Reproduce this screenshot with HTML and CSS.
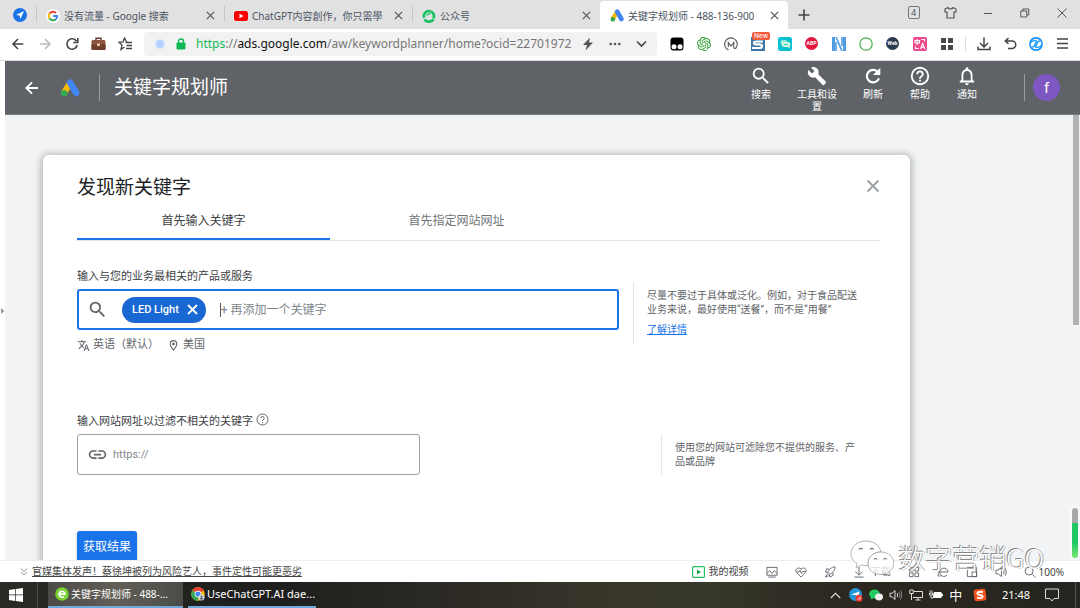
FILE: index.html
```html
<!DOCTYPE html>
<html lang="zh-CN">
<head>
<meta charset="utf-8">
<title>关键字规划师</title>
<link rel="stylesheet" href="styles.css">
</head>
<body>
<svg class="defs" aria-hidden="true">
  <symbol id="i-x" viewBox="0 0 12 12"><path d="M2 2l8 8M10 2l-8 8" fill="none" stroke="currentColor" stroke-width="1.3"/></symbol>
  <symbol id="i-ads" viewBox="0 0 24 22"><path d="M4.500 17L12.500 4.500" stroke="#fbbc04" stroke-width="7.500" fill="none"/><path d="M12.300 4.500L19.500 17" stroke="#4285f4" stroke-width="8" stroke-linecap="round"/><circle cx="4.800" cy="17.300" r="3.900" fill="#34a853"/></symbol>
  <symbol id="i-search" viewBox="0 0 24 24"><path fill="currentColor" d="M15.500 14h-.79l-.28-.27A6.470 6.470 0 0 0 16 9.500 6.500 6.500 0 1 0 9.500 16c1.610 0 3.090-.59 4.230-1.570l.27.28v.79l5 4.990L20.490 19l-4.990-5zm-6 0C7.010 14 5 11.990 5 9.500S7.010 5 9.500 5 14 7.010 14 9.500 11.990 14 9.500 14z"/></symbol>
  <symbol id="i-back" viewBox="0 0 16 16"><path d="M14 8H2.500M8 2.300L2.300 8 8 13.700" fill="none" stroke="currentColor" stroke-width="1.800"/></symbol>
</svg>

<header class="tabstrip">
  <button class="pinned" aria-label="主页"><svg width="14" height="14" viewBox="0 0 14 14"><circle cx="7" cy="7" r="7" fill="#1a73e8"/><path d="M3 7l8-4-3.500 8-1-3.400z" fill="#fff"/></svg></button>
  <div class="btab">
    <svg width="14" height="14" viewBox="0 0 14 14"><circle cx="7" cy="7" r="7" fill="#fff"/><g fill="none" stroke-width="2"><path d="M3.500 4.600A4.200 4.200 0 0 1 10 4" stroke="#ea4335"/><path d="M3.500 4.600a4.200 4.200 0 0 0 0 4.800" stroke="#fbbc05"/><path d="M3.500 9.400a4.200 4.200 0 0 0 6.300.8" stroke="#34a853"/><path d="M9.800 10.200A4.200 4.200 0 0 0 11.200 7H7.200" stroke="#4285f4"/></g></svg>
    <span class="btab-title">没有流量 - Google 搜索</span><button class="close" aria-label="关闭标签"><svg width="11" height="11"><use href="#i-x"/></svg></button>
  </div>
  <div class="btab">
    <svg width="14" height="14" viewBox="0 0 14 14"><rect y="2" width="14" height="10" rx="2.500" fill="#f00"/><path d="M5.500 4.700v4.600L9.500 7z" fill="#fff"/></svg>
    <span class="btab-title">ChatGPT内容創作，你只需學</span><button class="close" aria-label="关闭标签"><svg width="11" height="11"><use href="#i-x"/></svg></button>
  </div>
  <div class="btab">
    <svg width="14" height="14" viewBox="0 0 14 14" fill="none" stroke="#12c160" stroke-width="2.600"><path d="M2.200 8.800A5 5 0 0 1 8.500 2.300M8.800 2.400a5 5 0 0 1 2.600 7M11.500 10.300a5.500 5.500 0 0 1-9 .2"/><path d="M4.800 6.500A3 3 0 0 1 9 5" stroke-width="1.200"/></svg>
    <span class="btab-title">公众号</span><button class="close" aria-label="关闭标签"><svg width="11" height="11"><use href="#i-x"/></svg></button>
  </div>
  <div class="btab active">
    <svg width="14" height="13"><use href="#i-ads"/></svg>
    <span class="btab-title">关键字规划师 - 488-136-900</span><button class="close" aria-label="关闭标签"><svg width="11" height="11"><use href="#i-x"/></svg></button>
  </div>
  <button class="newtab" aria-label="新建标签"><svg width="12" height="12" viewBox="0 0 12 12"><path d="M6 .5v11M.5 6h11" stroke="#444" stroke-width="1.600"/></svg></button>
  <div class="winbtns">
    <button class="count">4</button>
    <button aria-label="皮肤"><svg width="13" height="13" viewBox="0 0 13 13" fill="none" stroke="#555" stroke-width="1.200"><path d="M4 1.500L1 3v3h2v6h7V6h2V3L9 1.500C8.500 3.500 4.500 3.500 4 1.500z"/></svg></button>
    <button aria-label="最小化"><svg width="10" height="10" viewBox="0 0 10 10"><path d="M1 5.500h8" stroke="#555"/></svg></button>
    <button aria-label="还原"><svg width="10" height="10" viewBox="0 0 10 10" fill="none" stroke="#555"><path d="M.8 3h6v6h-6zM2.800 3V1h6v6h-2"/></svg></button>
    <button aria-label="关闭"><svg width="12" height="12" viewBox="0 0 12 12"><path d="M1.500 1.500l9 9M10.500 1.500l-9 9" stroke="#555"/></svg></button>
  </div>
</header>

<div class="toolbar">
  <div class="cells">
    <button aria-label="后退"><svg class="ink" width="14" height="14"><use href="#i-back"/></svg></button>
    <button aria-label="前进"><svg width="14" height="14" viewBox="0 0 16 16"><path d="M2 8h11.500M8 2.300L13.700 8 8 13.700" fill="none" stroke="#bbb" stroke-width="1.800"/></svg></button>
    <button aria-label="刷新"><svg width="14" height="14" viewBox="0 0 14 14"><path d="M11.500 4.200A5.200 5.200 0 1 0 12.200 8" fill="none" stroke="#444" stroke-width="1.600"/><path d="M12.800 1v4.500H8.300" fill="none" stroke="#444" stroke-width="1.600"/></svg></button>
    <button aria-label="工具箱"><svg width="15" height="14" viewBox="0 0 15 14"><path d="M5 3V1.200h5V3" fill="none" stroke="#6b3a2a" stroke-width="1.400"/><rect x=".5" y="3" width="14" height="10" rx="1.500" fill="#8d5440"/><path d="M.5 7.500h14V12a1 1 0 0 1-1 1h-12a1 1 0 0 1-1-1z" fill="#6f3d2c"/><rect x="6" y="6.500" width="3" height="2.500" fill="#e8c9a0"/></svg></button>
    <button aria-label="收藏"><svg width="15" height="14" viewBox="0 0 15 14" fill="none" stroke="#444" stroke-width="1.300"><path d="M8.500 5L6.500 1 5 5 1 5.400l3 2.700L3 12.400 6.500 10M7.500 5.500H14M8.500 8.500H14M8 11.500h6"/></svg></button>
  </div>
  <div class="address">
    <svg width="12" height="12" viewBox="0 0 12 12"><circle cx="6" cy="6" r="5.500" fill="#dce9ff"/><circle cx="6" cy="6" r="4" fill="#b5d1ff"/></svg>
    <svg width="10" height="12" viewBox="0 0 10 12"><path d="M2.500 5V3.500a2.500 2.500 0 0 1 5 0V5" fill="none" stroke="#0fb955" stroke-width="1.400"/><rect x=".5" y="4.500" width="9" height="7" rx="1" fill="#0fb955"/></svg>
    <div class="url" role="textbox" aria-label="地址" contenteditable="true" spellcheck="false"><span class="scheme">https</span>://<span class="host">ads.google.com</span>/aw/keywordplanner/home?ocid=22701972</div>
    <div class="cells">
      <button aria-label="极速"><svg width="12" height="14" viewBox="0 0 12 14"><path d="M8 .5L1 8h4l-1.500 5.500L11 5.500H7z" fill="#555"/></svg></button>
      <button aria-label="更多"><svg width="12" height="4" viewBox="0 0 12 4" fill="#555"><circle cx="1.700" cy="2" r="1.300"/><circle cx="6" cy="2" r="1.300"/><circle cx="10.300" cy="2" r="1.300"/></svg></button>
      <button aria-label="展开"><svg width="11" height="8" viewBox="0 0 11 8"><path d="M1 1.500l4.500 4.500L10 1.500" fill="none" stroke="#444" stroke-width="1.600"/></svg></button>
    </div>
  </div>
  <div class="cells ext">
    <button aria-label="扩展"><svg width="14" height="14" viewBox="0 0 14 14"><rect x=".5" y=".5" width="13" height="13" rx="3" fill="#000"/><circle cx="4" cy="9.700" r="2.500" fill="#fff"/><circle cx="10" cy="9.700" r="2.500" fill="#fff"/></svg></button>
    <button aria-label="ChatGPT"><svg width="14" height="14" viewBox="0 0 24 24"><path fill="#2a9d2f" d="M22.280 9.820a5.980 5.980 0 0 0-.52-4.910 6.050 6.050 0 0 0-6.510-2.900A6.070 6.070 0 0 0 4.980 4.180a5.980 5.980 0 0 0-4 2.900 6.050 6.050 0 0 0 .74 7.100 5.980 5.980 0 0 0 .51 4.910 6.050 6.050 0 0 0 6.520 2.900A5.980 5.980 0 0 0 13.260 24a6.060 6.060 0 0 0 5.770-4.210 5.990 5.990 0 0 0 4-2.900 6.060 6.060 0 0 0-.75-7.070zm-9.020 12.610a4.480 4.480 0 0 1-2.880-1.040l.14-.08 4.780-2.760a.79.79 0 0 0 .39-.68v-6.740l2.020 1.170v5.620a4.500 4.500 0 0 1-4.450 4.510zM3.600 18.300a4.470 4.470 0 0 1-.54-3.010l.14.09 4.790 2.760a.77.77 0 0 0 .78 0l5.840-3.370v2.330L9.740 19.950A4.500 4.500 0 0 1 3.600 18.300zM2.340 7.900a4.490 4.490 0 0 1 2.370-1.970v5.670a.77.77 0 0 0 .39.680l5.810 3.350-2.020 1.170-4.830-2.790A4.500 4.500 0 0 1 2.340 7.900zm16.600 3.860L13.100 8.360l2.020-1.160 4.830 2.790a4.490 4.490 0 0 1-.68 8.100v-5.680a.79.79 0 0 0-.33-.65zm2.010-3.030l-.14-.09-4.780-2.780a.78.78 0 0 0-.78 0L9.410 9.230V6.900l4.860-2.840a4.500 4.500 0 0 1 6.680 4.670zM8.310 12.860L6.290 11.700V6.080a4.500 4.500 0 0 1 7.370-3.460l-.14.080-4.780 2.760a.79.79 0 0 0-.39.680zm1.090-2.360L12 9l2.610 1.500v3L12 15l-2.600-1.500z"/></svg></button>
    <button aria-label="Merlin"><svg width="14" height="14" viewBox="0 0 14 14" fill="none" stroke="#555" stroke-width="1.100"><path d="M4.500 13A6.300 6.300 0 1 1 12 11c-1 1-2.200.5-2.200-1V5.500L7 9 4.300 5.500V10"/></svg></button>
    <button class="has-new" aria-label="S"><svg width="14" height="14" viewBox="0 0 14 14"><rect width="14" height="14" fill="#3f77a8"/><path d="M12 4.500H5.500C2 4.500 2.500 7.300 5 7.300h3.500c3.500 0 3 3.700 0 3.700H1" fill="none" stroke="#fff" stroke-width="2.200"/></svg><span class="new">New</span></button>
    <button aria-label="聊天"><svg width="14" height="14" viewBox="0 0 14 14"><rect width="14" height="14" rx="2.500" fill="#06c1cf"/><rect x="2.500" y="3" width="7" height="5" rx="2" fill="#8fe6d8"/><path d="M6 5h4a2.500 2.500 0 0 1 1.500 4.500L12 11.500 9.500 10H6.500a2.500 2.500 0 0 1-.5-5z" fill="#d4f7df"/><path d="M6 7.500h4" stroke="#06c1cf" stroke-width=".8"/></svg></button>
    <button class="abp">ABP</button>
    <button aria-label="N"><svg width="14" height="14" viewBox="0 0 14 14"><path d="M0 0h3v14H0zM11 0h3v14h-3z" fill="#4e9be0"/><path d="M4 0l6 14M4 5v9M10 0v9" stroke="#4e9be0" stroke-width="1.600"/></svg></button>
    <button aria-label="圆环"><svg width="14" height="14" viewBox="0 0 14 14"><circle cx="7" cy="7" r="6.200" fill="none" stroke="#4caf50" stroke-width="1.200"/></svg></button>
    <button class="web">Web</button>
    <button class="trans" aria-label="翻译"><svg width="14" height="14" viewBox="0 0 14 14"><rect width="14" height="14" rx="2" fill="#ec4a8b"/><g fill="none" stroke="#fff" stroke-width="1.100"><path d="M2 3.500h4.500V6H2zM4.200 2v6M7.500 12L9.700 6.500 12 12M8.300 10.300h2.800M8.500 2.500h3v2M2.500 9.500v2h3"/></g></svg></button>
    <button aria-label="应用"><svg width="12" height="12" viewBox="0 0 12 12" fill="#484848"><path d="M0 0h5v5H0zM7 0h5v5H7zM0 7h5v5H0zM7 7h5v5H7z"/></svg></button>
  </div>
  <div class="cells tools">
    <button aria-label="下载"><svg width="14" height="14" viewBox="0 0 14 14" fill="none" stroke="#444" stroke-width="1.500"><path d="M7 .5v9M3 6l4 4 4-4M1 9.500v3h12v-3"/></svg></button>
    <button aria-label="恢复"><svg width="13" height="13" viewBox="0 0 13 13" fill="none" stroke="#444" stroke-width="1.500"><path d="M4.500 1L1.300 4l3.200 3M1.500 4H8a3.700 3.700 0 0 1 0 7.500H4"/></svg></button>
    <button aria-label="助手"><svg width="14" height="14" viewBox="0 0 14 14" fill="none"><circle cx="7" cy="7" r="6.100" stroke="#1b8df2" stroke-width="1.600"/><path d="M1 6.500c2-3 4-3.500 6.500-2.500L6 7.500M13 7.500c-2 3-4 3.500-6.500 2.500L8 6.500M3 10c2 .5 2.500-1.500 3-3M11 4c-2-.5-2.500 1.500-3 3" stroke="#2aa5f8" stroke-width="1.500"/></svg></button>
    <button aria-label="菜单"><svg width="11" height="11" viewBox="0 0 11 11"><path d="M0 1h11M0 5.500h11M0 10h11" stroke="#444" stroke-width="1.500"/></svg></button>
  </div>
</div>

<div class="viewport">
  <button class="gutter" aria-label="展开侧栏"><svg width="4" height="6" viewBox="0 0 4 6"><path d="M0 0l3.500 3L0 6z" fill="#999"/></svg></button>
  <div class="app">
    <div class="appbar">
      <button class="app-back" aria-label="返回"><svg width="16" height="16"><use href="#i-back"/></svg></button>
      <svg width="20" height="18"><use href="#i-ads"/></svg>
      <h1>关键字规划师</h1>
      <nav>
        <button><svg width="22" height="22"><use href="#i-search"/></svg>搜索</button>
        <button><svg width="20" height="22" viewBox="0 0 24 24"><path fill="currentColor" d="M22.700 19l-9.100-9.100c.9-2.300.4-5-1.500-6.900-2-2-5-2.400-7.400-1.300L9 6 6 9 1.600 4.700C.4 7.100.9 10.100 2.900 12.100c1.900 1.900 4.600 2.400 6.900 1.500l9.100 9.100c.4.4 1 .4 1.400 0l2.300-2.300c.5-.4.5-1.100.1-1.400z"/></svg>工具和设置</button>
        <button><svg width="22" height="22" viewBox="0 0 24 24"><path fill="none" stroke="currentColor" stroke-width="2.400" d="M17.500 8A6.800 6.800 0 1 0 18.500 14.500"/><path fill="currentColor" d="M20 3v8h-8z"/></svg>刷新</button>
        <button><svg width="22" height="22" viewBox="0 0 24 24"><path fill="currentColor" d="M11 18h2v-2h-2v2zm1-16a10 10 0 1 0 0 20 10 10 0 0 0 0-20zm0 18a8 8 0 1 1 0-16 8 8 0 0 1 0 16zm0-14a4 4 0 0 0-4 4h2a2 2 0 1 1 4 0c0 2-3 1.750-3 5h2c0-2.250 3-2.500 3-5a4 4 0 0 0-4-4z"/></svg>帮助</button>
        <button><svg width="22" height="22" viewBox="0 0 24 24"><path fill="currentColor" d="M12 22a2 2 0 0 0 2-2h-4c0 1.100.9 2 2 2zm6-6v-5c0-3.070-1.630-5.640-4.500-6.320V4a1.500 1.500 0 0 0-3 0v.68C7.640 5.360 6 7.920 6 11v5l-2 2v1h16v-1l-2-2zm-2 1H8v-6c0-2.480 1.510-4.500 4-4.500s4 2.020 4 4.500v6z"/></svg>通知</button>
      </nav>
      <div class="account"><button class="avatar">f</button></div>
    </div>
    <main>
      <section class="card">
        <button class="card-close" aria-label="关闭"><svg width="18" height="18" viewBox="0 0 18 18"><path d="M3.500 3.500l11 11M14.500 3.500l-11 11" stroke="currentColor" stroke-width="1.800"/></svg></button>
        <h2>发现新关键字</h2>
        <div class="tabs" role="tablist">
          <button role="tab" aria-selected="true">首先输入关键字</button>
          <button role="tab" aria-selected="false">首先指定网站网址</button>
        </div>
        <div class="row">
          <div class="field-col wide">
            <label for="kw">输入与您的业务最相关的产品或服务</label>
            <div class="field focus">
              <svg class="grey" width="21" height="21"><use href="#i-search"/></svg>
              <span class="chip">LED Light<button aria-label="移除"><svg width="11" height="11" viewBox="0 0 11 11"><path d="M1 1l9 9M10 1l-9 9" stroke="#fff" stroke-width="1.800"/></svg></button></span>
              <span class="caret"></span><input id="kw" type="text" placeholder="+ 再添加一个关键字">
            </div>
            <div class="locale">
              <button><svg width="13" height="13" viewBox="0 0 24 24"><path fill="currentColor" d="M12.870 15.070l-2.540-2.510.03-.03A17.520 17.520 0 0 0 14.070 6H17V4h-7V2H8v2H1v2h11.170C11.500 7.920 10.440 9.750 9 11.350 8.070 10.320 7.300 9.190 6.690 8h-2c.73 1.630 1.730 3.170 2.980 4.560l-5.090 5.020L4 19l5-5 3.110 3.110.76-2.040zM18.500 10h-2L12 22h2l1.120-3h4.750L21 22h2l-4.500-12zm-2.620 7l1.620-4.330L19.120 17h-3.240z"/></svg>英语（默认）</button>
              <button><svg width="13" height="13" viewBox="0 0 24 24"><path fill="currentColor" d="M12 2a7 7 0 0 0-7 7c0 5.250 7 13 7 13s7-7.750 7-13a7 7 0 0 0-7-7zM7 9a5 5 0 0 1 10 0c0 2.880-2.880 7.190-5 9.880C9.920 16.210 7 11.850 7 9z"/><circle cx="12" cy="9" r="2.500" fill="currentColor"/></svg>美国</button>
            </div>
          </div>
          <aside class="hint grow">
            <p>尽量不要过于具体或泛化。例如，对于食品配送<br>业务来说，最好使用“送餐”，而不是“用餐”</p>
            <a href="#">了解详情</a>
          </aside>
        </div>
        <div class="row second">
          <div class="field-col">
            <div class="label-line"><label for="site">输入网站网址以过滤不相关的关键字</label><button class="help" aria-label="帮助"><svg width="13" height="13" viewBox="0 0 13 13"><circle cx="6.500" cy="6.500" r="5.500" fill="none" stroke="currentColor"/><path d="M4.800 5.200a1.700 1.700 0 1 1 2.600 1.500c-.7.400-.9.700-.9 1.300M6.500 9v1.100" fill="none" stroke="currentColor"/></svg></button></div>
            <div class="field">
              <svg class="grey" width="21" height="21" viewBox="0 0 24 24"><path fill="currentColor" d="M3.900 12c0-1.710 1.390-3.100 3.100-3.100h4V7H7a5 5 0 0 0 0 10h4v-1.900H7A3.100 3.100 0 0 1 3.900 12zM8 13h8v-2H8v2zm9-6h-4v1.900h4a3.100 3.100 0 0 1 0 6.200h-4V17h4a5 5 0 0 0 0-10z"/></svg>
              <input id="site" class="site" type="text" placeholder="https://">
            </div>
          </div>
          <aside class="hint end">
            <p>使用您的网站可滤除您不提供的服务、产<br>品或品牌</p>
          </aside>
        </div>
        <button class="submit">获取结果</button>
      </section>
    </main>
    <div class="scroll-thumb"></div>
    <div class="meter"></div>
  </div>
</div>

<div class="status">
  <svg width="8" height="8" viewBox="0 0 8 8" fill="none" stroke="#999"><path d="M1 .5l3 3 3-3M1 4l3 3 3-3"/></svg>
  <a class="news" href="#">官媒集体发声！蔡徐坤被列为风险艺人，事件定性可能更恶劣</a>
  <button class="video"><svg width="13" height="12" viewBox="0 0 13 12"><rect x=".6" y=".6" width="11.800" height="10.800" rx="1" fill="none" stroke="#25c063" stroke-width="1.200"/><path d="M5 3.500v5L9 6z" fill="#18a84e"/></svg>我的视频</button>
  <div class="status-icons">
    <button aria-label="图片"><svg viewBox="0 0 13 13"><path d="M1 1.500h11v8.500H1zM1 8l3-3 2.500 3L9 5l3 3M2.500 12h8"/></svg></button>
    <button aria-label="健康"><svg viewBox="0 0 13 13"><path d="M6.500 12L1.500 7C-.5 4 2.500.5 6.500 3.200 10.500.5 13.500 4 11.500 7zM1.500 6.500h2.500l1.500-2 1.500 3.500 1.500-2h3"/></svg></button>
    <button aria-label="加速"><svg viewBox="0 0 13 13"><path d="M12 1C8 1 5 4 4 7.500L5.500 9C9 8 12 5 12 1zM6 3.500L3 3 1.500 6.500l2.500.5M9.500 7l.5 3-3.500 2L5.500 9M3.500 8.500L1.500 12l3.500-1.500"/></svg></button>
    <button class="dl"><svg viewBox="0 0 13 13"><path d="M6.500 1v8.500M2.500 6l4 4 4-4M1.500 12h10"/></svg>下载</button>
    <button aria-label="应用"><svg viewBox="0 0 13 13"><path d="M1.500 1.500h4v4h-4zM7.500 1.500h4v4h-4zM1.500 7.500h4v4h-4zM7.500 7.500h4v4h-4z"/></svg></button>
    <button aria-label="浏览"><svg viewBox="0 0 13 13"><path d="M3.500 6.500H12a4.500 4.500 0 1 0-1.300 3.500M3.500 4.500c-3 4-3.500 8 .5 6"/></svg></button>
    <button aria-label="窗口"><svg viewBox="0 0 13 13"><path d="M1.500 1.500h10v10h-10zM6.500 6.500h5v5h-5z"/></svg></button>
    <button aria-label="声音"><svg viewBox="0 0 13 13"><path d="M1 4.500h2.500L7 1.500v10l-3.500-3H1zM9 4c1 1.500 1 3.500 0 5M11 2.500c1.500 2.500 1.500 5.500 0 8"/></svg></button>
  </div>
  <button class="zoom"><svg viewBox="0 0 13 13"><circle cx="5.500" cy="5.500" r="4.300"/><path d="M9 9l3.500 3.500"/></svg>100%</button>
</div>

<footer class="taskbar">
  <button class="start" aria-label="开始"><svg width="14" height="14" viewBox="0 0 14 14" fill="#fff"><path d="M0 2l6-.9v5.500H0zM6.700 1L14 0v6.600H6.700zM0 7.300h6v5.600L0 12zM6.700 7.300H14V14l-7.300-1z"/></svg></button>
  <button class="task current"><svg width="14" height="14" viewBox="0 0 14 14"><circle cx="7" cy="7" r="6.800" fill="#77cf32"/><path d="M4 7.200h6a3 3 0 1 0-1 2.300" fill="none" stroke="#fff" stroke-width="1.700"/></svg>关键字规划师 - 488-...</button>
  <button class="task"><svg width="14" height="14" viewBox="0 0 14 14"><circle cx="7" cy="7" r="6.800" fill="#fbbc04"/><path d="M7 7L1.100 3.600a6.800 6.800 0 0 1 11.800 0z" fill="#ea4335"/><path d="M7 7L1.100 3.600A6.800 6.800 0 0 0 7 13.800z" fill="#34a853"/><circle cx="7" cy="7" r="3.300" fill="#fff"/><circle cx="7" cy="7" r="2.600" fill="#4285f4"/><circle cx="10.500" cy="10.500" r="3" fill="#cfd8e6"/><path d="M8.800 12.500a1.700 1.700 0 0 1 3.400 0" fill="#556"/><circle cx="10.500" cy="9.700" r="1" fill="#556"/></svg>UseChatGPT.AI dae...</button>
  <div class="tray">
    <button aria-label="隐藏的图标"><svg width="11" height="7" viewBox="0 0 11 7" fill="none" stroke="#ddd" stroke-width="1.200"><path d="M.8 6l4.700-4.700L10.200 6"/></svg></button>
    <button aria-label="浏览器"><svg width="14" height="14" viewBox="0 0 14 14"><circle cx="6.500" cy="6.500" r="6.500" fill="#2196d8"/><path d="M2 6.500l8.500-3-1.500 5-2.500-1.500z" fill="#fff"/><circle cx="10" cy="10.300" r="3.500" fill="#e53935"/><path d="M8.500 11.500h.8M10 11.500V9.500M11.200 11.500V8.500" stroke="#fff" stroke-width=".7"/></svg></button>
    <button aria-label="微信"><svg width="14" height="12" viewBox="0 0 14 12"><ellipse cx="5.500" cy="5" rx="5.300" ry="4.500" fill="#20cf5d"/><path d="M2 8l-.5 2.500L5 9z" fill="#20cf5d"/><ellipse cx="10" cy="8" rx="4" ry="3.400" fill="#eee"/><g fill="#286"><circle cx="3.800" cy="3.700" r=".6"/><circle cx="7.300" cy="3.700" r=".6"/></g></svg></button>
    <button aria-label="音量"><svg width="13" height="12" viewBox="0 0 13 12" fill="none" stroke="#ddd"><path d="M1 4.300h2L6 1.500v9L3 7.700H1zM8 4c.8 1.200.8 2.800 0 4"/><path d="M9.800 2.800c1.400 2 1.400 4.400 0 6.400M11.500 1.500c1.600 2.800 1.600 6.200 0 9" stroke="#888"/></svg></button>
    <button aria-label="网络"><svg width="14" height="12" viewBox="0 0 14 12" fill="none" stroke="#ddd"><path d="M5 2.500h8.500v6H4M9 8.500v2.500M6.500 11h5M.8 1h3.500v3.500H.8zM2.500 4.500V11"/></svg></button>
    <button aria-label="电池"><svg width="14" height="12" viewBox="0 0 14 12"><path d="M5 3h7.500v1.700H14v2.600h-1.500V9H4V6z" fill="#fff"/><path d="M1 1.500v2M3 1.500v2M.5 4h3v2h-3zM2 6v3h2" fill="none" stroke="#ddd"/></svg></button>
    <button class="ime">中</button>
    <button class="sogou" aria-label="搜狗输入法"><svg width="14" height="14" viewBox="0 0 14 14"><rect x="1" y="1" width="12" height="12" rx="2.500" fill="#f0541e" transform="rotate(-6 7 7)"/><path d="M10 4C5 3 3.500 5 5 6.200c1.500 1 4 .6 4.500 2C10 10 7 10.500 4 9.700" fill="none" stroke="#fff" stroke-width="1.900"/></svg></button>
    <time>21:48</time>
    <button aria-label="通知"><svg width="14" height="14" viewBox="0 0 14 14" fill="none" stroke="#ddd"><path d="M.5 1h13v9.500H9L7 13l-2-2.500H.5z"/></svg></button>
  </div>
</footer>

<div class="watermark">
  <svg width="44" height="36" viewBox="0 0 44 36"><g fill="#fff" fill-opacity=".8" stroke="#a0a0a0" stroke-width=".8"><path d="M16 1C7.500 1 1 6.500 1 13.500c0 4.500 2.200 7.800 6 10L6 28l5.500-3c2 .5 4.500.8 7 .5-2-7 4-13.500 12.300-13.500C30 5.500 24 1 16 1z"/><path d="M31 12c-7.500 0-13 5-13 11.500S23.500 34.500 31 34.500c1.500 0 3-.2 4.500-.7L40 35.500l-1.200-3.600c3-2.200 5-5 5-8.600C43.800 17 38.500 12 31 12z"/></g><g fill="none" stroke="#777" stroke-width="1.100"><path d="M9 9.500a2 2 0 0 1 3.600 0M20 9.500a2 2 0 0 1 3.600 0M24 19.500a1.800 1.800 0 0 1 3.200 0M33.500 19.500a1.800 1.800 0 0 1 3.200 0"/></g></svg>
  <span>数字营销GO</span>
</div>
</body>
</html>
```
FILE: styles.css
```css
* { box-sizing: border-box; }
html, body { height: 100%; }
body {
  margin: 0;
  position: relative;
  display: flex;
  flex-direction: column;
  overflow: hidden;
  background: #fff;
  color: #3c4043;
  font: 11px/14px Roboto, "Noto Sans CJK SC", sans-serif;
}
button {
  margin: 0; padding: 0; border: 0; background: none;
  color: inherit; font: inherit; cursor: pointer;
  display: flex; align-items: center; justify-content: center;
}
input { border: 0; outline: 0; background: none; padding: 0; font: inherit; min-width: 0; }
h1, h2, p { margin: 0; font-weight: 400; }
svg { flex: none; display: block; }
.defs { position: absolute; width: 0; height: 0; }
.ink { color: #444; }
.grey { color: #5f6368; }

/* Browser tabs */
.tabstrip {
  display: flex; flex: none; height: 29px;
  background: #e1e1e1; color: #4b5563;
  font-family: "Noto Sans", "Noto Sans CJK SC", sans-serif; font-size: 10px;
}
.pinned { width: 36px; padding-left: 4px; flex: none; }
.btab {
  display: flex; align-items: center; gap: 4px;
  flex: 0 1 188px; min-width: 0; padding: 2px 8px 0 10px;
  background: linear-gradient(#c6c6c6, #c6c6c6) 0 6px / 1px 16px no-repeat;
}
.btab-title { flex: 1; min-width: 0; overflow: hidden; white-space: nowrap; }
.btab.active { background: #fff; border-radius: 4px 4px 0 0; margin-top: 1px; padding-top: 1px; }
.close { width: 12px; height: 12px; color: #555; }
.newtab { width: 32px; flex: none; }
.winbtns { display: grid; grid-template-columns: repeat(5, 37px); margin-left: auto; height: 25px; align-items: center; }
.winbtns .count { justify-self: center; width: 12px; height: 13px; border: 1px solid #777; border-radius: 2px; font-size: 9px; line-height: 11px; }

/* Address bar */
.toolbar { display: flex; align-items: center; flex: none; height: 32px; padding: 0 5px 2px 4px; border-bottom: 1px solid #ddd; }
.cells { display: grid; grid-auto-flow: column; grid-auto-columns: 27px; align-items: center; }
.address { display: flex; align-items: center; gap: 10px; flex: 1; min-width: 0; height: 24px; margin: 0 6px 0 5px; padding-left: 10px; background: #f2f2f2; border-radius: 4px; }
.url { flex: 1; min-width: 0; overflow: hidden; white-space: nowrap; outline: 0; color: #777; font: 12px/18px "Noto Sans", sans-serif; }
.url + .cells { margin-left: -10px; padding-right: 2px; }
.scheme { color: #12b955; }
.host { color: #111; }
.tools { grid-auto-columns: 26px; margin-left: 5px; padding-left: 5px; border-left: 1px solid #ddd; }
.has-new { position: relative; }
.new { position: absolute; top: -5px; right: 1px; padding: 0 2px; border-radius: 2px; background: #f25a3c; color: #fff; font-size: 7px; line-height: 8px; }
.abp, .web { justify-self: center; width: 13px; height: 13px; border-radius: 50%; background: #e3173e; color: #fff; font-size: 5px; font-weight: 700; line-height: 13px; }
.web { background: #2c3a52; }

/* Page area */
.viewport { display: flex; flex: 1; min-height: 0; }
.gutter { width: 5px; flex: none; }
.app { position: relative; flex: 1; min-width: 0; overflow: hidden; background: #f1f3f4; }
.appbar { display: flex; align-items: center; height: 54px; padding: 0 20px 0 19px; background: #5f6368; color: #fff; border-bottom: 1px solid #777b80; }
.app-back { margin-right: 20px; }
.appbar h1 { margin-left: 19px; padding-left: 14px; border-left: 1px solid #9a9da1; font-size: 19px; line-height: 27px; white-space: nowrap; }
.appbar nav { display: flex; align-items: flex-start; gap: 25px; height: 100%; margin-left: auto; padding-top: 4px; }
.appbar nav button { flex-direction: column; max-width: 40px; font-size: 10px; line-height: 12px; gap: 2px; }
.account { margin-left: 46px; padding-left: 8px; border-left: 1px solid #9a9da1; }
.avatar { width: 27px; height: 27px; border-radius: 50%; background: #7e57c2; font-size: 15px; }
main { padding: 40px 38px 0; }
.card { position: relative; max-width: 867px; min-height: 480px; padding: 18px 30px 0 34px; background: #fff; border-radius: 6px; box-shadow: 0 1px 7px 2px rgba(60, 64, 67, .35); }
.card h2 { color: #202124; font-size: 19px; line-height: 30px; }
.card-close { position: absolute; top: 22px; right: 28px; color: #9aa0a6; }
.tabs { display: grid; grid-template-columns: 253px 253px; height: 38px; border-bottom: 1px solid #e4e5e7; }
.tabs button { height: 37px; font-size: 12px; color: #70757a; border-bottom: 2px solid transparent; }
.tabs button[aria-selected="true"] { color: #3c4043; border-color: #1a73e8; }
.row { display: flex; align-items: flex-start; margin-top: 28px; }
.row.second { margin-top: 61px; }
.field-col { display: flex; flex-direction: column; gap: 4px; flex: 0 1 343px; min-width: 0; line-height: 16px; }
.field-col.wide { flex-basis: 542px; }
.field { display: flex; align-items: center; height: 41px; padding: 0 9px; border: 1px solid #9aa0a6; border-radius: 3px; }
.field.focus { border: 2px solid #1a73e8; padding: 0 8px; }
.field input { flex: 1; margin-left: 5px; font-size: 12px; color: #3c4043; }
.field .site { font-size: 11px; }
.field input::placeholder { color: #80868b; opacity: 1; }
.chip { display: flex; align-items: center; gap: 8px; height: 26px; margin: 0 14px; padding: 0 8px 0 10px; border-radius: 13px; background: #1967d2; color: #fff; font-weight: 500; white-space: nowrap; }
.caret { width: 1px; height: 14px; background: #555; }
.field .caret + input { margin-left: 0; }
.locale { display: flex; gap: 8px; padding-top: 3px; color: #5f6368; }
.locale button { gap: 3px; }
.label-line { display: flex; gap: 3px; height: 16px; }
.help { color: #5f6368; height: 13px; margin-top: -1px; }
.hint { min-height: 41px; padding: 7px 0 0 13px; border-left: 1px solid #e4e5e7; color: #5f6368; font-size: 10px; white-space: nowrap; }
.hint.grow { flex: 1; min-height: 62px; margin: 13px 0 0 14px; }
.hint.end { flex: 0 0 219px; margin: 20px 0 0 auto; }
.hint a { display: inline-block; margin-top: 6px; color: #1a73e8; text-decoration: underline; }
.submit { height: 32px; margin-top: 56px; padding: 0 6px; border-radius: 3px; background: #1a73e8; color: #fff; font-size: 12px; box-shadow: 0 1px 2px rgba(0, 0, 0, .3); }
.scroll-thumb { position: absolute; top: 54px; right: 1px; width: 6px; height: 210px; background: #b1b2b4; }
.meter { position: absolute; right: 2px; bottom: 2px; width: 6px; height: 50px; border-radius: 3px; background: linear-gradient(#a8a8a8 0 30%, #1fc864 30% 70%, #7be86f); box-shadow: 0 0 4px 2px rgba(255, 255, 255, .8); }

/* Browser status bar */
.status { display: flex; align-items: center; flex: none; height: 22px; padding: 1px 16px 0 20px; border-top: 1px solid #eee; color: #444; font-size: 10px; }
.news { margin-left: 4px; color: #444; text-decoration: underline; }
.status button { white-space: nowrap; }
.video { gap: 4px; margin-left: auto; }
.status-icons { display: flex; gap: 17px; margin: 0 17px; }
.status-icons svg, .zoom svg { width: 12px; height: 12px; fill: none; stroke: #60646a; stroke-width: 1; }
.dl { gap: 6px; }
.zoom { gap: 3px; font-family: "Noto Sans", sans-serif; }

/* Desktop taskbar */
.taskbar { display: flex; flex: none; height: 26px; padding-right: 4px; background: linear-gradient(90deg, #2a2a25, #1e1e1d 25%, #38342a 55%, #37382b 65%, #2c2820 78%, #25251f); color: #fff; font: 11px/14px "Noto Sans", "Noto Sans CJK SC", sans-serif; }
.start { width: 38px; margin-right: 10px; padding-right: 6px; border-right: 1px solid #4c4c47; flex: none; }
.task { justify-content: flex-start; gap: 2px; flex: 0 1 128px; margin-right: 5px; padding: 0 3px; border-bottom: 2px solid #6fa9dc; white-space: nowrap; overflow: hidden; }
.task.current { flex-basis: 135px; padding: 0 7px; font-size: 10px; background: linear-gradient(90deg, #4c4a45, #625f57 50%, #4b4c48); }
.tray { display: flex; align-items: center; gap: 6px; margin-left: auto; padding-right: 16px; border-right: 1px solid #55554f; }
.tray button { min-width: 14px; }
.tray .sogou { margin-left: 4px; }
.ime { font-size: 13px; }
.tray time { margin: 0 9px; font-size: 11px; }

/* Watermark */
.watermark { position: absolute; right: 36px; bottom: 32px; display: flex; align-items: center; gap: 4px; pointer-events: none; color: #fff; font: 300 27px/36px "Noto Sans CJK SC", sans-serif; text-shadow: -1px -1px 0 #888, 1px 0 0 #aaa; white-space: nowrap; }
```
